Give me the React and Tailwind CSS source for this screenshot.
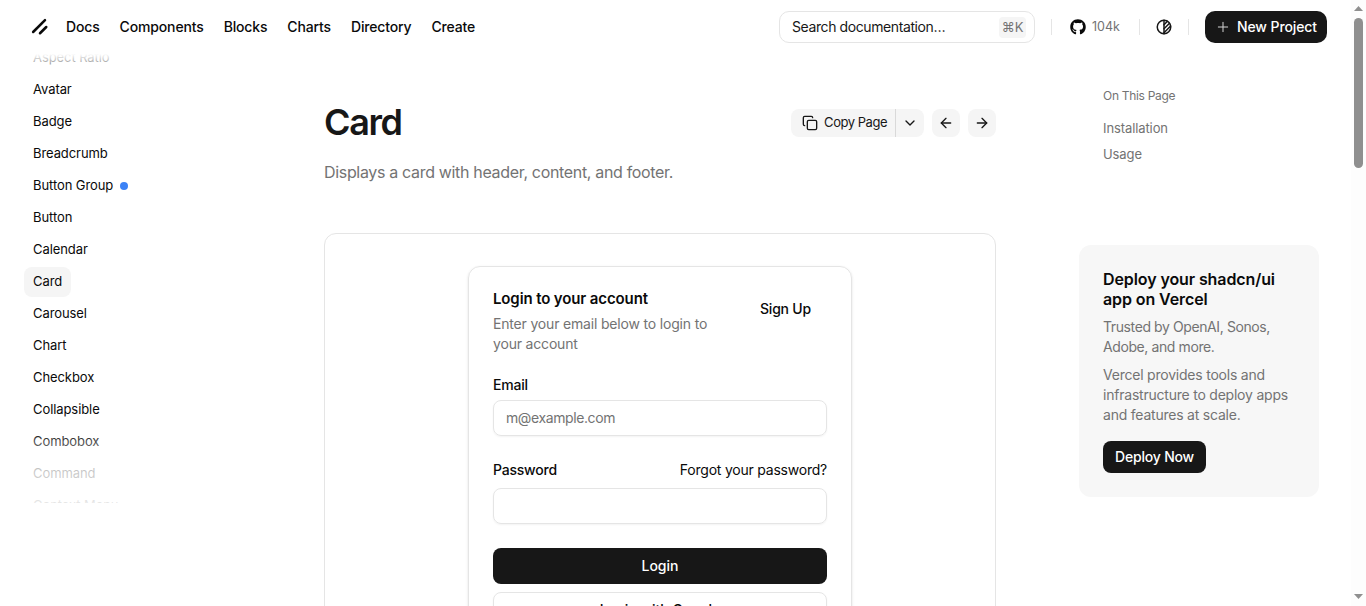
import { ArrowLeft, ArrowRight, ChevronDown, Copy, Plus } from "lucide-react";
import { FaGithub } from "react-icons/fa";

const navLinks = ["Docs", "Components", "Blocks", "Charts", "Directory", "Create"];

const sidebarItems = [
  "Aspect Ratio",
  "Avatar",
  "Badge",
  "Breadcrumb",
  "Button Group",
  "Button",
  "Calendar",
  "Card",
  "Carousel",
  "Chart",
  "Checkbox",
  "Collapsible",
  "Combobox",
  "Command",
  "Context Menu",
];

const Logo = () => (
  <svg viewBox="0 0 256 256" className="h-5 w-5 text-[#0a0a0a]" fill="none" stroke="currentColor" strokeWidth="32" strokeLinecap="round">
    <line x1="208" y1="128" x2="128" y2="208" />
    <line x1="192" y1="40" x2="40" y2="192" />
  </svg>
);

const ThemeIcon = () => (
  <svg viewBox="0 0 24 24" className="h-[18px] w-[18px] text-[#171717]" fill="none" stroke="currentColor" strokeWidth="2" strokeLinecap="round" strokeLinejoin="round">
    <path d="M3 12a9 9 0 1 0 18 0a9 9 0 1 0 -18 0" />
    <path d="M12 3v18" />
    <path d="M12 9l4.65 -4.65" />
    <path d="M12 14.3l7.37 -7.37" />
    <path d="M12 19.6l8.85 -8.85" />
  </svg>
);

const Divider = () => <div className="h-4 w-px bg-[#e5e5e5]" />;

const Header = () => (
  <header className="flex h-[54px] shrink-0 items-center pl-[30px] pr-6">
    <Logo />
    <nav className="ml-[16px] flex gap-5 text-sm font-medium tracking-[-0.15px] text-[#0a0a0a]">
      {navLinks.map((link) => (
        <span key={link}>{link}</span>
      ))}
    </nav>
    <div className="ml-auto flex items-center">
      <div className="flex h-[32px] w-[256px] items-center justify-between rounded-[10px] border border-[#e5e5e5] pl-3 pr-2 text-sm text-[#171717]">
        <span className="tracking-[-0.4px]">Search documentation…</span>
        <span className="flex h-[21px] w-[27px] items-center justify-center rounded bg-[#f5f5f5] text-[13px] text-[#737373]">⌘K</span>
      </div>
      <div className="ml-4"><Divider /></div>
      <FaGithub className="ml-[18px] h-4 w-4 text-[#0a0a0a]" />
      <span className="ml-[6px] w-[29px] text-[12.5px] text-[#737373]">104k</span>
      <div className="ml-[18px]"><Divider /></div>
      <div className="ml-[15px]"><ThemeIcon /></div>
      <div className="ml-[15px]"><Divider /></div>
      <button className="ml-4 flex h-[32px] w-[122px] items-center justify-center gap-[6px] rounded-[10px] bg-[#171717] text-sm font-medium tracking-[-0.1px] text-white">
        <Plus className="h-4 w-4 text-[#d4d4d4]" strokeWidth={1.5} />
        New Project
      </button>
    </div>
  </header>
);

const Sidebar = () => (
  <aside className="relative h-[449px] w-[324px] shrink-0 overflow-hidden pl-6">
    <ul className="-mt-[11px] flex flex-col gap-[2px]">
      {sidebarItems.map((item) => (
        <li key={item} className="flex h-[30px] items-center">
          <span className={`flex h-[30px] items-center rounded-lg px-[9px] text-[13px] font-normal tracking-[-0.08px] text-[#0a0a0a] ${item === "Card" ? "bg-[#f5f5f5]" : ""}`}>
            {item}
            {item === "Button Group" && <span className="ml-[7px] h-2 w-2 rounded-full bg-[#3b82f6]" />}
          </span>
        </li>
      ))}
    </ul>
    <div className="absolute inset-x-0 top-0 h-6 bg-gradient-to-b from-white to-transparent" />
    <div className="absolute inset-x-0 bottom-0 h-[74px] bg-gradient-to-t from-white/90 via-white/75 to-transparent" />
  </aside>
);

const PageActions = () => (
  <div className="flex items-center gap-2 text-[#171717]">
    <div className="flex h-7 items-center rounded-lg bg-[#f5f5f5] text-[13px]">
      <span className="flex h-7 items-center gap-[6px] border-r border-[#d9d9d9] pl-[11px] pr-2 tracking-[-0.47px]">
        <Copy className="h-4 w-4" strokeWidth={2} />
        Copy Page
      </span>
      <span className="flex w-7 items-center justify-center">
        <ChevronDown className="h-4 w-4" />
      </span>
    </div>
    <span className="flex h-7 w-7 items-center justify-center rounded-lg bg-[#f5f5f5]">
      <ArrowLeft className="h-4 w-4" />
    </span>
    <span className="flex h-7 w-7 items-center justify-center rounded-lg bg-[#f5f5f5]">
      <ArrowRight className="h-4 w-4" />
    </span>
  </div>
);

const LoginCard = () => (
  <div className="w-[384px] rounded-xl border border-[#e5e5e5] px-6 pt-6 shadow-sm">
    <div className="flex justify-between">
      <div className="w-[236px]">
        <h3 className="text-[15px] font-semibold leading-4 tracking-[-0.12px] text-[#0a0a0a]">Login to your account</h3>
        <p className="mt-[7px] text-sm leading-5 tracking-[-0.18px] text-[#737373]">Enter your email below to login to your account</p>
      </div>
      <span className="mr-4 mt-[8px] text-sm font-medium leading-5 tracking-[-0.2px] text-[#0a0a0a]">Sign Up</span>
    </div>
    <label className="mt-[24px] block text-sm font-medium leading-[14px] tracking-[-0.2px] text-[#0a0a0a]">Email</label>
    <div className="mt-[8px] flex h-9 items-center rounded-lg border border-[#e5e5e5] px-3 text-sm tracking-[-0.4px] text-[#737373] shadow-xs">m@example.com</div>
    <div className="mt-[27px] flex justify-between text-sm font-medium leading-[14px] tracking-[-0.22px] text-[#0a0a0a]">
      <span>Password</span>
      <span className="font-normal">Forgot your password?</span>
    </div>
    <div className="mt-[11px] h-9 rounded-lg border border-[#e5e5e5] shadow-xs" />
    <button className="mt-6 flex h-9 w-full items-center justify-center rounded-lg bg-[#171717] text-sm font-medium text-white">Login</button>
    <button className="mt-2 flex h-9 w-full items-center justify-center rounded-lg border border-[#e5e5e5] text-sm font-medium text-[#0a0a0a] shadow-xs">Login with Google</button>
  </div>
);

const Main = () => (
  <main className="w-[672px] shrink-0">
    <div className="flex h-[93px] items-end justify-between pb-[1px]">
      <h1 className="text-[36px] font-semibold leading-[48px] tracking-[-1.4px] text-[#171717]">Card</h1>
      <div className="mb-[9px]"><PageActions /></div>
    </div>
    <p className="mt-[13px] text-base leading-6 tracking-[-0.33px] text-[#737373]">Displays a card with header, content, and footer.</p>
    <div className="mt-[49px] flex justify-center rounded-t-xl border border-[#e5e5e5] pb-10 pt-8">
      <LoginCard />
    </div>
  </main>
);

const RightColumn = () => (
  <div className="ml-[83px] w-[240px] shrink-0">
    <div className="px-6 pt-[34px] text-xs leading-4 text-[#737373]">
      <p className="tracking-[-0.3px]">On This Page</p>
      <p className="mt-[16px] text-[13px] tracking-[-0.1px]">Installation</p>
      <p className="mt-[10px] text-[13px] tracking-[-0.1px]">Usage</p>
    </div>
    <div className="mt-[83px] rounded-xl bg-[#f7f7f7] px-6 pb-6 pt-6">
      <h3 className="text-base font-semibold leading-5 tracking-[-0.1px] text-[#0a0a0a]">Deploy your shadcn/ui app on Vercel</h3>
      <p className="mt-2 text-sm leading-5 tracking-[-0.4px] text-[#737373]">Trusted by OpenAI, Sonos, Adobe, and more.</p>
      <p className="mt-2 text-sm leading-5 tracking-[-0.22px] text-[#737373]">Vercel provides tools and infrastructure to deploy apps and features at scale.</p>
      <button className="mt-4 flex h-8 w-[103px] items-center justify-center rounded-lg bg-[#171717] text-sm font-medium tracking-[-0.2px] text-white">Deploy Now</button>
    </div>
  </div>
);

const Scrollbar = () => (
  <div className="flex h-full w-[15px] shrink-0 flex-col items-center justify-between bg-[#fdfdfd]">
    <div className="flex w-full flex-col items-center">
      <svg viewBox="0 0 9 5" className="mt-[6px] h-[5px] w-[9px] fill-[#8f8f8f]"><path d="M4.5 0L9 5H0z" /></svg>
      <div className="mt-[7px] h-[150px] w-[9px] rounded-[5px] bg-[#8f8f8f]" />
    </div>
    <svg viewBox="0 0 9 5" className="mb-[7px] h-[5px] w-[9px] fill-[#8f8f8f]"><path d="M0 0H9L4.5 5z" /></svg>
  </div>
);

export default function App() {
  return (
    <div className="flex h-[606px] overflow-hidden bg-white font-['Inter',sans-serif]">
      <div className="flex min-w-0 flex-1 flex-col">
        <Header />
        <div className="flex min-h-0 flex-1 overflow-hidden">
          <Sidebar />
          <Main />
          <RightColumn />
        </div>
      </div>
      <Scrollbar />
    </div>
  );
}
